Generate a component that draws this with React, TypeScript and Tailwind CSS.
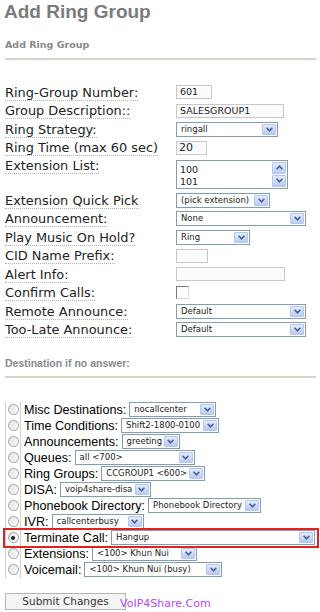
import React from "react";

const VERDANA = { fontFamily: '"DejaVu Sans", Verdana, sans-serif' };
const ARIAL = { fontFamily: '"Liberation Sans", Arial, sans-serif' };

function Arrow({ up = false }: { up?: boolean }) {
  return (
    <span className="flex h-full w-[14px] shrink-0 items-center justify-center rounded-[1px] border border-[#b4c6ef] bg-gradient-to-b from-[#e4ecfe] to-[#b8cbf8]">
      <svg width="7" height="5" viewBox="0 0 7 5">
        <path
          d={up ? "M0.6 4.2 L3.5 1.2 L6.4 4.2" : "M0.6 0.8 L3.5 3.8 L6.4 0.8"}
          stroke="#4a5f86"
          strokeWidth="1.6"
          fill="none"
        />
      </svg>
    </span>
  );
}

function Select({ value, w }: { value: string; w: string }) {
  return (
    <div className={`flex h-[15px] ${w} shrink-0 items-stretch border border-[#7f9db9] bg-white p-px`}>
      <span
        className="flex-1 overflow-hidden whitespace-nowrap pl-[3px] text-[8.5px] leading-[11px] text-[#222]"
        style={VERDANA}
      >
        {value}
      </span>
      <Arrow />
    </div>
  );
}

function Input({ value = "", w }: { value?: string; w: string }) {
  return (
    <div
      className={`h-[14px] ${w} border border-[#c8c8c8] bg-[#fbfbfb] pl-[3px] text-[9.5px] leading-[12px] text-[#222]`}
      style={VERDANA}
    >
      {value}
    </div>
  );
}

function Label({ children }: { children: React.ReactNode }) {
  return (
    <div
      className="w-[171px] shrink-0 whitespace-nowrap text-[12.9px] leading-[15px] text-[#222]"
      style={VERDANA}
    >
      <span className="border-b border-dotted border-[#b5b5b5]">{children}</span>
    </div>
  );
}

function Row({ label, children }: { label: string; children: React.ReactNode }) {
  return (
    <div className="flex h-[18.45px] items-center">
      <Label>{label}</Label>
      {children}
    </div>
  );
}

const dests = [
  { label: "Misc Destinations:", value: "nocallcenter", w: "w-[87px]" },
  { label: "Time Conditions:", value: "Shift2-1800-0100", w: "w-[98px]" },
  { label: "Announcements:", value: "greeting", w: "w-[58px]" },
  { label: "Queues:", value: "all <700>", w: "w-[120px]" },
  { label: "Ring Groups:", value: "CCGROUP1 <600>", w: "w-[104px]" },
  { label: "DISA:", value: "voip4share-disa", w: "w-[91px]" },
  { label: "Phonebook Directory:", value: "Phonebook Directory", w: "w-[113px]" },
  { label: "IVR:", value: "callcenterbusy", w: "w-[92px]" },
  { label: "Terminate Call:", value: "Hangup", w: "w-[204px]", checked: true },
  { label: "Extensions:", value: "<100> Khun Nui", w: "w-[105px]" },
  { label: "Voicemail:", value: "<100> Khun Nui (busy)", w: "w-[138px]" },
];

function Radio({ checked = false }: { checked?: boolean }) {
  return (
    <span className="flex h-[11px] w-[11px] items-center justify-center rounded-full border border-[#a3a3a3] bg-gradient-to-br from-[#e2e2e2] to-white">
      {checked && <span className="h-[4px] w-[4px] rounded-full bg-[#222]" />}
    </span>
  );
}

export default function App() {
  return (
    <div className="relative h-[612px] w-[320px] overflow-hidden bg-white">
      {/* Title */}
      <h1
        className="pl-[4px] text-[19px] font-bold leading-[24px] text-[#7b7b7b]"
        style={ARIAL}
      >
        Add Ring Group
      </h1>

      <div className="px-[5px]">
        <h2 className="mt-[15px] text-[9.5px] font-bold leading-[12px] text-[#8a8a8a]" style={VERDANA}>
          Add Ring Group
        </h2>
        <div className="mt-[7px] h-[2px] w-[311px] bg-[#d8d3c8]" />

        {/* Form */}
        <div className="mt-[23px]">
          <Row label="Ring-Group Number:">
            <Input value="601" w="w-[36px]" />
          </Row>
          <Row label="Group Description::">
            <Input value="SALESGROUP1" w="w-[108px]" />
          </Row>
          <Row label="Ring Strategy:">
            <Select value="ringall" w="w-[102px]" />
          </Row>
          <Row label="Ring Time (max 60 sec)">
            <div
              className="h-[14px] w-[31px] border border-[#c8c8c8] bg-[#fbfbfb] pl-[2px] text-[11px] leading-[12px] text-[#222]"
              style={VERDANA}
            >
              20
            </div>
          </Row>
          <div className="flex h-[34.5px] items-start pt-[1px]">
            <Label>Extension List:</Label>
            <div className="mt-[2px] flex h-[29px] w-[112px] border border-[#7f9db9] bg-white p-px">
              <div
                className="flex-1 pl-[2px] pt-[2px] text-[9.5px] leading-[12px] text-[#222]"
                style={VERDANA}
              >
                <div>100</div>
                <div>101</div>
              </div>
              <div className="flex w-[14px] flex-col gap-px">
                <div className="h-[12px]">
                  <Arrow up />
                </div>
                <div className="h-[12px]">
                  <Arrow />
                </div>
              </div>
            </div>
          </div>
          <Row label="Extension Quick Pick">
            <Select value="(pick extension)" w="w-[94px]" />
          </Row>
          <Row label="Announcement:">
            <Select value="None" w="w-[130px]" />
          </Row>
          <Row label="Play Music On Hold?">
            <Select value="Ring" w="w-[74px]" />
          </Row>
          <Row label="CID Name Prefix:">
            <Input w="w-[32px]" />
          </Row>
          <Row label="Alert Info:">
            <Input w="w-[109px]" />
          </Row>
          <Row label="Confirm Calls:">
            <span className="h-[13px] w-[13px] border border-t-[#7a7a7a] border-l-[#7a7a7a] border-r-[#d8d8d8] border-b-[#d8d8d8] bg-white" />
          </Row>
          <Row label="Remote Announce:">
            <Select value="Default" w="w-[130px]" />
          </Row>
          <Row label="Too-Late Announce:">
            <Select value="Default" w="w-[130px]" />
          </Row>
        </div>

        <h2 className="mt-[18px] text-[10.5px] font-bold leading-[13px] text-[#8a8a8a]" style={ARIAL}>
          Destination if no answer:
        </h2>
        <div className="mt-[6px] h-[2px] w-[311px] bg-[#d8d3c8]" />

        {/* Destinations */}
        <div className="mt-[24px]">
          {dests.map((d) => (
            <div
              key={d.label}
              className={`flex h-[16px] items-center ${d.checked ? "w-[312px] outline-2 outline-[#e3211d]" : ""}`}
            >
              <div className="flex h-full w-[16px] shrink-0 items-center justify-center border-x border-[#d0d0d0]">
                <Radio checked={d.checked} />
              </div>
              <span
                className="ml-[3px] mr-[3px] whitespace-nowrap text-[12.6px] leading-[16px] text-black"
                style={ARIAL}
              >
                {d.label}
              </span>
              <Select value={d.value} w={d.w} />
            </div>
          ))}
        </div>

        <button
          type="button"
          className="mt-[15px] h-[17px] w-[121px] border border-[#b5b5b5] bg-[#f4f4f4] text-[10.5px] leading-[14px] text-[#333]"
          style={VERDANA}
        >
          Submit Changes
        </button>
      </div>

      {/* Watermark */}
      <span
        className="absolute left-[120px] top-[596px] text-[11px] leading-[15px] text-[#b548f5]"
        style={VERDANA}
      >
        VoIP4Share.Com
      </span>
    </div>
  );
}
